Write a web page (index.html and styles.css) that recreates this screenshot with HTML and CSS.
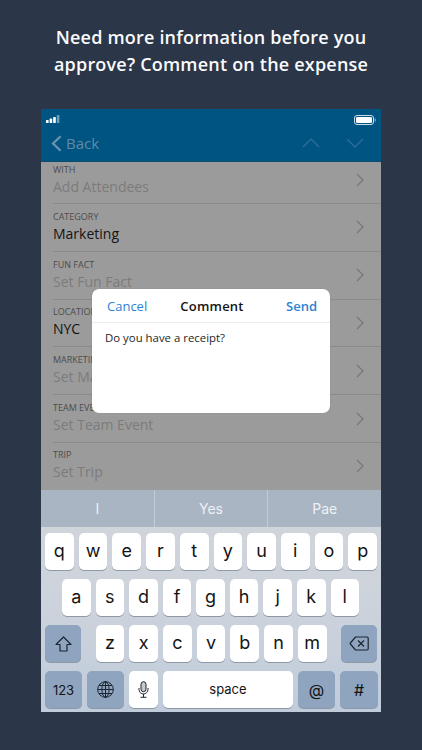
FILE: index.html
```html
<!DOCTYPE html>
<html lang="en">
<head>
<meta charset="utf-8">
<title>Comment on the expense</title>
<link rel="stylesheet" href="styles.css">
</head>
<body>
<main class="page">
  <h1 class="headline">Need more information before you<br>approve? Comment on the expense</h1>
  <section class="phone">
    <header class="appbar">
      <div class="status">
        <svg class="signal" width="16" height="9" viewBox="0 0 16 9"><rect x="0" y="5" width="2.6" height="3" rx=".6" fill="#fff"/><rect x="3.6" y="3.5" width="2.6" height="4.5" rx=".6" fill="#fff"/><rect x="7.2" y="2" width="2.6" height="6" rx=".6" fill="#fff"/><rect x="10.8" y="0" width="2.6" height="8" rx=".6" fill="#6f9dbc"/></svg>
        <svg class="battery" width="22" height="10" viewBox="0 0 22 10"><rect x=".5" y=".5" width="19" height="9" rx="2.5" fill="none" stroke="#c9dbe8"/><rect x="2" y="2" width="16" height="6" rx="1.2" fill="#fff"/><rect x="20.6" y="3.500" width="1" height="3" fill="#9fbdd2"/></svg>
      </div>
      <nav class="nav">
        <div class="back">
          <svg width="11" height="17" viewBox="0 0 11 17"><path d="M9.600 1.200 2 8.500l7.600 7.300" fill="none" stroke="#6d93b1" stroke-width="2.200"/></svg>
          <span>Back</span>
        </div>
        <div class="arrows">
          <svg width="18" height="10" viewBox="0 0 18 10"><path d="M1 9 9 1l8 8" fill="none" stroke="#2d6d97" stroke-width="1.300"/></svg>
          <svg width="18" height="10" viewBox="0 0 18 10"><path d="M1 1l8 8 8-8" fill="none" stroke="#2d6d97" stroke-width="1.300"/></svg>
        </div>
      </nav>
    </header>

    <div class="list">
      <div class="row row-first"><div class="cell"><div class="label">WITH</div><div class="value muted">Add Attendees</div></div><svg class="chev" width="8" height="14" viewBox="0 0 8 14"><path d="M1 1l6 6-6 6" fill="none" stroke="#777" stroke-width="1.200"/></svg></div>
      <div class="row"><div class="cell"><div class="label">CATEGORY</div><div class="value">Marketing</div></div><svg class="chev" width="8" height="14" viewBox="0 0 8 14"><path d="M1 1l6 6-6 6" fill="none" stroke="#777" stroke-width="1.200"/></svg></div>
      <div class="row"><div class="cell"><div class="label">FUN FACT</div><div class="value muted">Set Fun Fact</div></div><svg class="chev" width="8" height="14" viewBox="0 0 8 14"><path d="M1 1l6 6-6 6" fill="none" stroke="#777" stroke-width="1.200"/></svg></div>
      <div class="row"><div class="cell"><div class="label">LOCATION</div><div class="value">NYC</div></div><svg class="chev" width="8" height="14" viewBox="0 0 8 14"><path d="M1 1l6 6-6 6" fill="none" stroke="#777" stroke-width="1.200"/></svg></div>
      <div class="row"><div class="cell"><div class="label">MARKETING</div><div class="value muted">Set Marketing</div></div><svg class="chev" width="8" height="14" viewBox="0 0 8 14"><path d="M1 1l6 6-6 6" fill="none" stroke="#777" stroke-width="1.200"/></svg></div>
      <div class="row"><div class="cell"><div class="label">TEAM EVENT</div><div class="value muted">Set Team Event</div></div><svg class="chev" width="8" height="14" viewBox="0 0 8 14"><path d="M1 1l6 6-6 6" fill="none" stroke="#777" stroke-width="1.200"/></svg></div>
      <div class="row row-last"><div class="cell"><div class="label">TRIP</div><div class="value muted">Set Trip</div></div><svg class="chev" width="8" height="14" viewBox="0 0 8 14"><path d="M1 1l6 6-6 6" fill="none" stroke="#777" stroke-width="1.200"/></svg></div>
    </div>

    <div class="modal">
      <div class="modal-head">
        <span class="modal-btn">Cancel</span>
        <span class="modal-title">Comment</span>
        <span class="modal-btn modal-send">Send</span>
      </div>
      <div class="modal-body">Do you have a receipt?</div>
    </div>

    <div class="suggest">
      <div class="sug">I</div>
      <div class="sug">Yes</div>
      <div class="sug">Pae</div>
    </div>

    <div class="keyboard">
      <div class="keys">
        <div class="key">q</div><div class="key">w</div><div class="key">e</div><div class="key">r</div><div class="key">t</div><div class="key">y</div><div class="key">u</div><div class="key">i</div><div class="key">o</div><div class="key">p</div>
      </div>
      <div class="keys keys-mid">
        <div class="key">a</div><div class="key">s</div><div class="key">d</div><div class="key">f</div><div class="key">g</div><div class="key">h</div><div class="key">j</div><div class="key">k</div><div class="key">l</div>
      </div>
      <div class="keys keys-third">
        <div class="key key-dark key-side">
          <svg width="17" height="16" viewBox="0 0 17 16"><path d="M8.500 1 1 8.500h4V15h7V8.500h4z" fill="none" stroke="#1c2530" stroke-width="1.200" stroke-linejoin="round"/></svg>
        </div>
        <div class="letters">
          <div class="key">z</div><div class="key">x</div><div class="key">c</div><div class="key">v</div><div class="key">b</div><div class="key">n</div><div class="key">m</div>
        </div>
        <div class="key key-dark key-side">
          <svg width="20" height="15" viewBox="0 0 20 15"><path d="M6.500 1H18a1.200 1.200 0 0 1 1.200 1.200v10.600A1.200 1.200 0 0 1 18 14H6.500L1 7.500z" fill="none" stroke="#1c2530" stroke-width="1.200" stroke-linejoin="round"/><path d="M9 4.500l6 6m0-6-6 6" fill="none" stroke="#1c2530" stroke-width="1.200"/></svg>
        </div>
      </div>
      <div class="keys keys-bottom">
        <div class="key key-dark key-37 key-small">123</div>
        <div class="key key-dark key-37">
          <svg width="17" height="17" viewBox="0 0 17 17" fill="none" stroke="#1c2530" stroke-width="1"><circle cx="8.500" cy="8.500" r="7.800"/><ellipse cx="8.500" cy="8.500" rx="3.600" ry="7.800"/><path d="M8.500 .7v15.600M.7 8.500h15.600M2 4.500h13M2 12.500h13"/></svg>
        </div>
        <div class="key key-mic">
          <svg width="11" height="17" viewBox="0 0 11 17" fill="none" stroke="#1c2530" stroke-width="1"><rect x="3" y=".7" width="5" height="10" rx="2.500" fill="#1c2530" fill-opacity=".25"/><path d="M1 7v1.500a4.500 4.500 0 0 0 9 0V7M5.500 13v3M2.500 16.300h6"/></svg>
        </div>
        <div class="key key-space">space</div>
        <div class="key key-dark key-37 key-sym">@</div>
        <div class="key key-dark key-38 key-sym">#</div>
      </div>
    </div>
  </section>
</main>
</body>
</html>
```

FILE: styles.css
```css
* { box-sizing: border-box; }
html, body { margin: 0; padding: 0; }
body {
  width: 422px;
  height: 750px;
  overflow: hidden;
  background: #2b3648;
  font-family: "Open Sans", sans-serif;
}
.page {
  padding-top: 24px;
  display: flex;
  flex-direction: column;
  align-items: center;
}
.headline {
  margin: 0;
  color: #fafbfc;
  font-size: 18px;
  font-weight: 600;
  line-height: 27px;
  letter-spacing: .2px;
  text-align: center;
  white-space: nowrap;
}
.phone {
  position: relative;
  margin-top: 31px;
  width: 340px;
  height: 603px;
  display: flex;
  flex-direction: column;
  overflow: hidden;
}
.appbar {
  height: 53px;
  flex: none;
  background: #005482;
  padding: 0 5px;
  border-bottom: 1px solid #0d4b70;
}
.status {
  height: 17px;
  padding-top: 4px;
  display: flex;
  justify-content: space-between;
  align-items: center;
}
.nav {
  height: 34px;
  display: flex;
  justify-content: space-between;
  align-items: center;
  padding: 0 12px 0 5px;
}
.back {
  display: flex;
  align-items: center;
  gap: 4px;
  color: #5f8aa9;
  font-size: 15px;
}
.arrows {
  display: flex;
  gap: 26px;
}
.list {
  height: 328px;
  flex: none;
  background: #9b9b9b;
  padding: 0 0 0 12px;
}
.row {
  height: 47.8px;
  border-bottom: 1px solid #8a8a8a;
  display: flex;
  justify-content: space-between;
  align-items: center;
  padding: 0 17px 0 0;
}
.row-first { height: 42px; padding-bottom: 5px; }
.row-last { border-bottom: 0; height: 47px; padding-bottom: 1px; }
.cell {
  display: flex;
  flex-direction: column;
}
.label {
  font-size: 9px;
  line-height: 13px;
  color: #4c4c4c;
}
.value {
  font-size: 14px;
  line-height: 22px;
  color: #141414;
}
.muted { color: #7c7c7c; }
.chev { flex: none; }
.modal {
  position: absolute;
  left: 51px;
  top: 180px;
  width: 238px;
  height: 124px;
  background: #fff;
  border-radius: 7px;
  box-shadow: 0 0 1px rgba(0,0,0,.2);
}
.modal-head {
  height: 34px;
  padding: 0 13px 0 15px;
  display: grid;
  grid-template-columns: 1fr auto 1fr;
  align-items: center;
  border-bottom: 1px solid #ececec;
}
.modal-title {
  font-size: 13px;
  font-weight: 600;
  color: #141414;
  letter-spacing: .2px;
}
.modal-btn {
  font-size: 13px;
  color: #2b83d2;
}
.modal-send { font-weight: 600; justify-self: end; }
.modal-body {
  padding: 7px 13px;
  font-size: 11.4px;
  line-height: 16px;
  color: #262626;
}
.suggest {
  height: 37px;
  flex: none;
  display: flex;
  background: #a9b5c2;
}
.sug {
  flex: 1;
  display: flex;
  align-items: center;
  justify-content: center;
  color: #eef1f5;
  font-family: Inter, sans-serif;
  font-size: 14px;
  border-left: 1px solid #c3ccd6;
}
.sug:first-child { border-left: 0; }
.keyboard {
  flex: 1;
  background: linear-gradient(180deg, #d0d4db 0%, #cdd3dc 40%, #c0ccdb 100%);
  padding: 6px 4px 4px;
  display: flex;
  flex-direction: column;
  gap: 9px;
}
.keys {
  display: flex;
  gap: 5px;
  height: 37px;
}
.key {
  flex: 1;
  display: flex;
  align-items: center;
  justify-content: center;
  background: #fff;
  border-radius: 5px;
  box-shadow: 0 1px 0 #8f98a5;
  color: #141414;
  font-family: Inter, sans-serif;
  font-size: 18px;
  padding-bottom: 2px;
}
.keys-mid { padding: 0 18px 0 17px; }
.keys-third { gap: 0; justify-content: space-between; }
.letters {
  display: flex;
  gap: 5px;
  flex: none;
  width: 231px;
}
.key-dark { background: #8fa5bf; padding-bottom: 0; }
.key-side { flex: none; width: 36px; }
.key-37 { flex: none; width: 37px; }
.key-38 { flex: none; width: 38px; }
.key-mic { flex: none; width: 29px; padding: 0; }
.key-space {
  flex: none;
  width: 130px;
  font-size: 13px;
  padding-bottom: 1px;
}
.key-small { font-size: 13px; }
.key-sym { font-size: 16px; }
```
